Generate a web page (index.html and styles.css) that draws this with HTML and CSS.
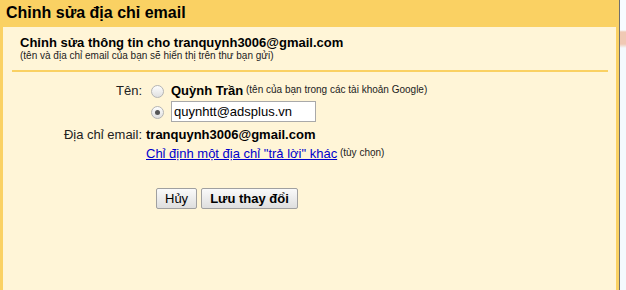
FILE: index.html
```html
<!DOCTYPE html>
<html lang="vi">
<head>
  <meta charset="UTF-8">
  <title>Chỉnh sửa địa chỉ email</title>
  <link rel="stylesheet" href="styles.css">
</head>
<body>

  <div class="dialog">
    <!-- Title bar -->
    <div class="dialog-title">Chỉnh sửa địa chỉ email</div>

    <div class="dialog-body">
      <div class="intro">
        <div class="intro-title">Chỉnh sửa thông tin cho tranquynh3006@gmail.com</div>
        <div class="hint">(tên và địa chỉ email của bạn sẽ hiển thị trên thư bạn gửi)</div>
      </div>

      <div class="separator"></div>

      <!-- Form rows -->
      <div class="form">
        <div class="row row-name">
          <div class="label">Tên:</div>
          <div class="value">
            <span class="radio"></span>
            <span class="strong">Quỳnh Trần</span>
            <span class="hint">&nbsp;(tên của bạn trong các tài khoản Google)</span>
          </div>
        </div>

        <div class="row row-custom">
          <div class="label"></div>
          <div class="value">
            <span class="radio checked"></span>
            <input class="text-input" type="text" value="quynhtt@adsplus.vn">
          </div>
        </div>

        <div class="row row-email">
          <div class="label">Địa chỉ email:</div>
          <div class="value strong">tranquynh3006@gmail.com</div>
        </div>

        <div class="row row-link">
          <div class="label"></div>
          <div class="value">
            <a href="#" class="link">Chỉ định một địa chỉ "trả lời" khác</a>
            <span class="hint">&nbsp;(tùy chọn)</span>
          </div>
        </div>

        <div class="row row-buttons">
          <div class="label"></div>
          <div class="value buttons">
            <button class="btn">Hủy</button>
            <button class="btn btn-primary">Lưu thay đổi</button>
          </div>
        </div>
      </div>
    </div>
  </div>

  <!-- Edge of the page behind the dialog -->
  <div class="page-edge"></div>

</body>
</html>
```

FILE: styles.css
```css
/* General Styles */
body {
  margin: 0;
  height: 290px;
  display: flex;
  overflow: hidden;
  font-family: "Liberation Sans", Arial, sans-serif;
  font-size: 13px;
  color: #000;
  background-color: #f5f9fd;
}

.dialog {
  width: 619px;
  display: flex;
  flex-direction: column;
  background-color: #fad163;
}

.dialog-title {
  height: 27px;
  line-height: 26px;
  padding-left: 6px;
  font-size: 16px;
  font-weight: bold;
}

.dialog-body {
  flex: 1;
  margin: 0 3px;
  background-color: #fff5d7;
}

/* Intro */
.intro {
  padding: 8px 0 0 17px;
}

.intro-title {
  font-weight: bold;
  line-height: 15px;
}

.hint {
  font-size: 10px;
  line-height: 11px;
  color: #222;
}

.separator {
  height: 2px;
  margin: 9px 8px 0 9px;
  background-color: #fad163;
}

/* Form */
.form {
  padding: 8px 0 0 17px;
}

.row {
  display: flex;
  align-items: center;
}

.label {
  width: 122px;
  padding-right: 4px;
  text-align: right;
  color: #222;
}

.value {
  display: flex;
  align-items: center;
  white-space: nowrap;
}

.row-name {
  height: 20px;
}

.row-custom {
  height: 23px;
}

.row-email {
  height: 19px;
  padding-top: 2px;
}

.row-link {
  height: 19px;
}

.row-name .hint,
.row-link .hint {
  align-self: flex-end;
  padding-bottom: 3px;
}

.strong {
  font-weight: bold;
}

.radio {
  width: 11px;
  height: 11px;
  margin: 2px 7px 0 5px;
  border: 1px solid #b4b4b4;
  border-radius: 50%;
  background: linear-gradient(#fdfdfd, #e0e0e0);
  position: relative;
}

.radio.checked::after {
  content: "";
  position: absolute;
  left: 3px;
  top: 3px;
  width: 5px;
  height: 5px;
  border-radius: 50%;
  background-color: #555;
}

.text-input {
  width: 145px;
  height: 21px;
  box-sizing: border-box;
  margin: 0;
  padding: 0 2px;
  border: 1px solid #a9a9a9;
  background-color: #fff;
  font-family: inherit;
  font-size: 13px;
  color: #000;
}

.link {
  color: #0000cc;
  text-decoration: underline;
}

/* Buttons */
.row-buttons {
  margin-top: 25px;
}

.buttons {
  padding-left: 10px;
  gap: 4px;
}

.btn {
  height: 21px;
  padding: 0 8px;
  border: 1px solid #a0a0a0;
  border-radius: 2px;
  background: linear-gradient(#fafafa, #dedede);
  font-family: inherit;
  font-size: 13px;
  color: #000;
  cursor: pointer;
}

.btn-primary {
  font-weight: bold;
}

/* Right edge */
.page-edge {
  flex: 1;
  border-left: 1px solid #6f6f6f;
  background: linear-gradient(#f7fbff 0, #f7fbff 30px, #f0c9b4 32px, #f0c9b4 44px, #f4f9fd 48px, #f4f9fd 100%);
}
```
